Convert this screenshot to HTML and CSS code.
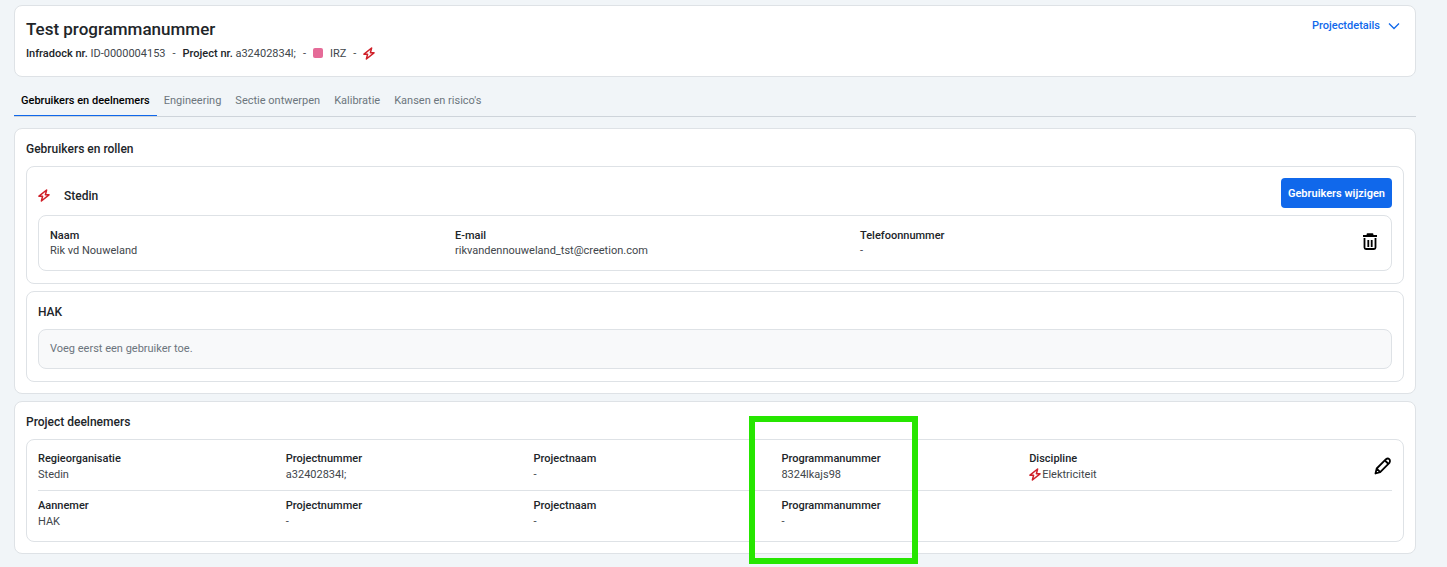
FILE: index.html
```html
<!DOCTYPE html>
<html lang="nl">
<head>
    <meta charset="utf-8">
    <title>Test programmanummer</title>
    <meta name="viewport" content="width=device-width, initial-scale=1.0">
    <link rel="stylesheet" href="styles.css">
</head>
<body>
    <svg class="sprite" aria-hidden="true">
        <symbol id="bolt" viewBox="0 0 12 13">
            <path d="M8.6 1 1 7.2h3.6L3.4 12 11 5.8H7.4L8.6 1z" fill="none" stroke="currentColor" stroke-width="1.5" stroke-linejoin="round"/>
        </symbol>
    </svg>

    <header class="card project-header">
        <div>
            <h1>Test programmanummer</h1>
            <div class="meta">
                <span><b>Infradock nr.</b> ID-0000004153</span>
                <span>-</span>
                <span><b>Project nr.</b> a32402834l;</span>
                <span>-</span>
                <span class="status"><i class="swatch"></i>IRZ</span>
                <span>-</span>
                <svg class="bolt"><use href="#bolt"/></svg>
            </div>
        </div>
        <button class="details-toggle" type="button">Projectdetails
            <svg width="12" height="12" viewBox="0 0 12 12"><path d="M1 3.5l5 5 5-5" fill="none" stroke="currentColor" stroke-width="1.3"/></svg>
        </button>
    </header>

    <nav class="tabs">
        <a class="active" href="#gebruikers">Gebruikers en deelnemers</a>
        <a href="#engineering">Engineering</a>
        <a href="#sectie">Sectie ontwerpen</a>
        <a href="#kalibratie">Kalibratie</a>
        <a href="#kansen">Kansen en risico's</a>
    </nav>

    <main>
        <section class="card" id="gebruikers">
            <h2>Gebruikers en rollen</h2>
            <div class="card group">
                <div class="group-header">
                    <div class="group-title">
                        <svg class="bolt"><use href="#bolt"/></svg>
                        <h3>Stedin</h3>
                    </div>
                    <button class="primary" type="button">Gebruikers wijzigen</button>
                </div>
                <div class="card user">
                    <dl><dt>Naam</dt><dd>Rik vd Nouweland</dd></dl>
                    <dl><dt>E-mail</dt><dd>rikvandennouweland_tst@creetion.com</dd></dl>
                    <dl><dt>Telefoonnummer</dt><dd>-</dd></dl>
                    <button class="icon-button" type="button" aria-label="Verwijderen">
                        <svg width="16" height="18" viewBox="0 0 16 18"><path d="M1 3h14M5.5 2V1.2h5V2M2.5 5v9.5q0 1.5 1.5 1.5h8q1.5 0 1.5-1.5V5M6.3 7v7M9.7 7v7" fill="none" stroke="currentColor" stroke-width="1.8" stroke-linejoin="round"/></svg>
                    </button>
                </div>
            </div>
            <div class="card group">
                <h3>HAK</h3>
                <div class="card empty">Voeg eerst een gebruiker toe.</div>
            </div>
        </section>

        <section class="card">
            <h2>Project deelnemers</h2>
            <div class="card participants">
                <div class="participant">
                    <dl><dt>Regieorganisatie</dt><dd>Stedin</dd></dl>
                    <dl><dt>Projectnummer</dt><dd>a32402834l;</dd></dl>
                    <dl><dt>Projectnaam</dt><dd>-</dd></dl>
                    <dl class="marked"><dt>Programmanummer</dt><dd>8324lkajs98</dd></dl>
                    <dl><dt>Discipline</dt><dd class="discipline"><svg class="bolt"><use href="#bolt"/></svg>Elektriciteit</dd></dl>
                    <button class="icon-button" type="button" aria-label="Bewerken">
                        <svg width="18" height="18" viewBox="0 0 18 18"><path d="M1.5 16.5l1.2-5L12 2.2q1.8-1.4 3.2 0t.2 3.6L6.2 15.2zM11 3.5L14.5 7M2.7 11.5l3.5 3.7" fill="none" stroke="currentColor" stroke-width="1.8" stroke-linejoin="round"/></svg>
                    </button>
                </div>
                <div class="participant">
                    <dl><dt>Aannemer</dt><dd>HAK</dd></dl>
                    <dl><dt>Projectnummer</dt><dd>-</dd></dl>
                    <dl><dt>Projectnaam</dt><dd>-</dd></dl>
                    <dl><dt>Programmanummer</dt><dd>-</dd></dl>
                </div>
            </div>
        </section>
    </main>
</body>
</html>
```

FILE: styles.css
```css
*, *::after {box-sizing: border-box;}
body {margin: 0; padding: 5px 31px 12px 14px; background-color: #f1f5f8; color: #212529; font: 11px/16px Roboto, "Liberation Sans", sans-serif;}
h1, h2, h3, dl, dd {margin: 0;}
h1 {font-size: 17px; line-height: 24px; font-weight: 500;}
h2, h3 {font-size: 12px; line-height: 18px; font-weight: 500;}
h2 {margin-bottom: 8px;}
b, dt {font-weight: 500;}
dd {color: #41464b;}
button {font: inherit; border: 0; background: none; padding: 0; cursor: pointer;}
svg {display: block; flex: none;}
.sprite {position: absolute; width: 0; height: 0;}
.bolt {width: 12px; height: 13px; margin-bottom: 2px; color: #d0212a;}
.card {background-color: white; border: 1px solid #dee2e6; border-radius: 8px; padding: 11px;}

.project-header {display: flex; justify-content: space-between; align-items: flex-start; min-height: 72px;}
.meta {display: flex; align-items: center; gap: 7px; margin-top: 5px; color: #41464b;}
.meta b {color: #212529;}
.status {display: flex; align-items: center; gap: 7px;}
.swatch {width: 10px; height: 10px; margin-bottom: 2px; border-radius: 2px; background-color: #e56b98;}
.details-toggle {display: flex; align-items: center; gap: 8px; padding: 1px 4px 0 0; color: #1068eb; font-weight: 500;}

.tabs {display: flex; height: 40px; border-bottom: 1px solid #ced4da; margin-bottom: 11px;}
.tabs a {padding: 16px 7px 0; color: #6c757d; text-decoration: none;}
.tabs .active {color: black; font-weight: 500; border-bottom: 1px solid #1068eb;}

main {display: flex; flex-direction: column; gap: 7px;}
.group {padding-bottom: 12px;}
.group + .group {margin-top: 7px;}
.group-header {display: flex; align-items: flex-end; justify-content: space-between; margin-bottom: 7px;}
.group-title {display: flex; align-items: center; gap: 14px; padding-bottom: 3px;}
.primary {height: 30px; padding: 1px 7px 0; border-radius: 4px; background-color: #1068eb; color: white; font-weight: 600;}
.user {display: grid; grid-template-columns: repeat(3, 1fr) 115px; align-items: center; min-height: 56px;}
.user dl {line-height: 15px;}
.icon-button {justify-self: end; padding-bottom: 2px; color: black;}
.user .icon-button {padding-right: 2px;}
.empty {margin-top: 8px; background-color: #f8f9fa; color: #6c757d;}

.participant {display: grid; grid-template-columns: repeat(5, 1fr) 115px; align-items: center;}
.participant + .participant {margin-top: 7px; padding-top: 7px; border-top: 1px solid #dee2e6;}
.discipline {display: flex; align-items: center; gap: 1px;}
.marked {position: relative;}
.marked::after {content: ""; position: absolute; left: -32px; top: -35px; width: 169px; height: 148px; border: 6px solid #26e600;}
```
